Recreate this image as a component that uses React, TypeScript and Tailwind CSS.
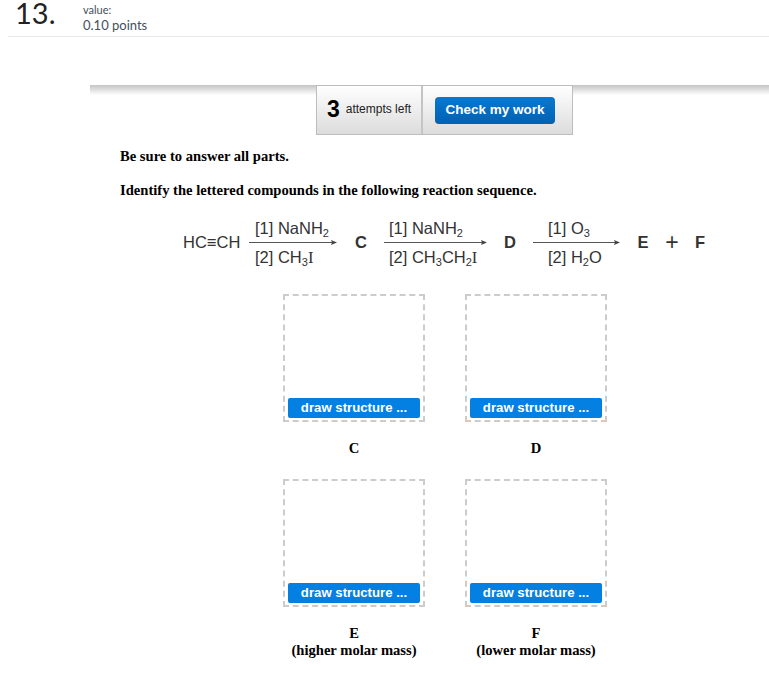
const serif = "font-['Liberation_Serif',serif]";

function Arrow({ width }: { width: number }) {
  return (
    <svg width={width} height="7" viewBox={`0 0 ${width} 7`} className="block">
      <line x1="0" y1="3.5" x2={width - 4} y2="3.5" stroke="#555" strokeWidth="1.2" />
      <path d={`M${width - 6} 1 L${width} 3.5 L${width - 6} 6 L${width - 5} 3.5 Z`} fill="#444" />
    </svg>
  );
}

function Step({ top, bottom, width }: { top: React.ReactNode; bottom: React.ReactNode; width: number }) {
  return (
    <div className="flex flex-col" style={{ width }}>
      <div className="h-[20px] pl-[6px] text-[16.5px] leading-[20px] whitespace-nowrap">{top}</div>
      <div className="my-[1px]">
        <Arrow width={width} />
      </div>
      <div className="h-[20px] pl-[6px] text-[16.5px] leading-[20px] whitespace-nowrap">{bottom}</div>
    </div>
  );
}

function Sub({ children }: { children: React.ReactNode }) {
  return <sub className="text-[11px] leading-none align-[-3px] bottom-auto">{children}</sub>;
}

function Serifi() {
  return <span className={serif}>I</span>;
}

function Letter({ children }: { children: string }) {
  return <span className="w-[12px] text-center text-[16.5px] font-bold leading-none">{children}</span>;
}

function DrawBox({ label, note }: { label: string; note?: string }) {
  return (
    <div className="flex w-[142px] flex-col items-center">
      <div className="flex h-[128px] w-[142px] items-end border-2 border-dashed border-[#cccccc] px-[3px] pb-[2px]">
        <button className="h-[20px] w-full rounded-[2px] bg-[#0480e2] text-center text-[13.2px] font-bold leading-[20px] text-white">
          draw structure ...
        </button>
      </div>
      <div className={`${serif} mt-[18px] text-center text-[14.6px] font-bold leading-[17px] text-black whitespace-nowrap`}>
        <div>{label}</div>
        {note && <div>{note}</div>}
      </div>
    </div>
  );
}

export default function App() {
  return (
    <div className="h-[678px] w-[769px] overflow-hidden bg-white font-['Liberation_Sans',sans-serif]">
      <div className="ml-[8px] flex h-[37px] items-start border-b border-[#e8e8e8] pl-[7px]">
        <div className="w-[68px] font-['Lato',sans-serif] text-[29px] leading-[26px] text-[#222222]">13.</div>
        <div className="pt-[3px] font-['Lato',sans-serif] text-[#44505c]">
          <div className="text-[11px] leading-[13px]">value:</div>
          <div className="mt-[1px] text-[13px] leading-[16px]">0.10 points</div>
        </div>
      </div>

      <div className="relative ml-[90px] mt-[48px]">
        <div className="h-[10px] bg-gradient-to-b from-[#c4c4c4] to-white" />
        <div className="absolute left-[226px] top-0 flex h-[50px] border border-[#bdbdbd] bg-gradient-to-b from-white to-[#dcdcdc]">
          <div className="flex w-[106px] items-center justify-center gap-[6px] border-r-2 border-[#c4c4c4] pb-[2px]">
            <span className="text-[23px] font-bold leading-none text-black">3</span>
            <span className="text-[12px] leading-none text-[#222222]">attempts left</span>
          </div>
          <div className="flex w-[149px] items-center pl-[12px]">
            <button className="h-[27px] w-[120px] rounded-[4px] bg-gradient-to-b from-[#0a78cf] to-[#0062b4] pb-[2px] text-[13.5px] font-bold leading-[25px] text-white">
              Check my work
            </button>
          </div>
        </div>
      </div>

      <div className={`${serif} ml-[120px] mt-[53px] text-[14.6px] font-bold leading-[17px] text-black`}>
        <p>Be sure to answer all parts.</p>
        <p className="mt-[17px]">Identify the lettered compounds in the following reaction sequence.</p>
      </div>

      <div className="ml-[183px] mt-[19px] flex items-center text-[#333333]">
        <span className="w-[66px] text-[16.5px] leading-none">HC≡CH</span>
        <Step
          width={88}
          top={<>[1] NaNH<Sub>2</Sub></>}
          bottom={<>[2] CH<Sub>3</Sub><Serifi /></>}
        />
        <span className="w-[18px]" />
        <Letter>C</Letter>
        <span className="w-[17px]" />
        <Step
          width={103}
          top={<span className="-ml-[1px]">[1] NaNH<Sub>2</Sub></span>}
          bottom={<span className="-ml-[1px]">[2] CH<Sub>3</Sub>CH<Sub>2</Sub><Serifi /></span>}
        />
        <span className="w-[17px]" />
        <Letter>D</Letter>
        <span className="w-[17px]" />
        <Step
          width={87}
          top={<span className="ml-[9px]">[1] O<Sub>3</Sub></span>}
          bottom={<span className="ml-[9px]">[2] H<Sub>2</Sub>O</span>}
        />
        <span className="w-[17px]" />
        <Letter>E</Letter>
        <span className="ml-[16px] w-[14px] text-center text-[23px] font-light leading-[17px]">+</span>
        <span className="w-[15px]" />
        <Letter>F</Letter>
      </div>

      <div className="ml-[283px] mt-[27px] grid w-[324px] grid-cols-[142px_142px] gap-x-[40px] gap-y-[22px]">
        <DrawBox label="C" />
        <DrawBox label="D" />
        <DrawBox label="E" note="(higher molar mass)" />
        <DrawBox label="F" note="(lower molar mass)" />
      </div>
    </div>
  );
}
